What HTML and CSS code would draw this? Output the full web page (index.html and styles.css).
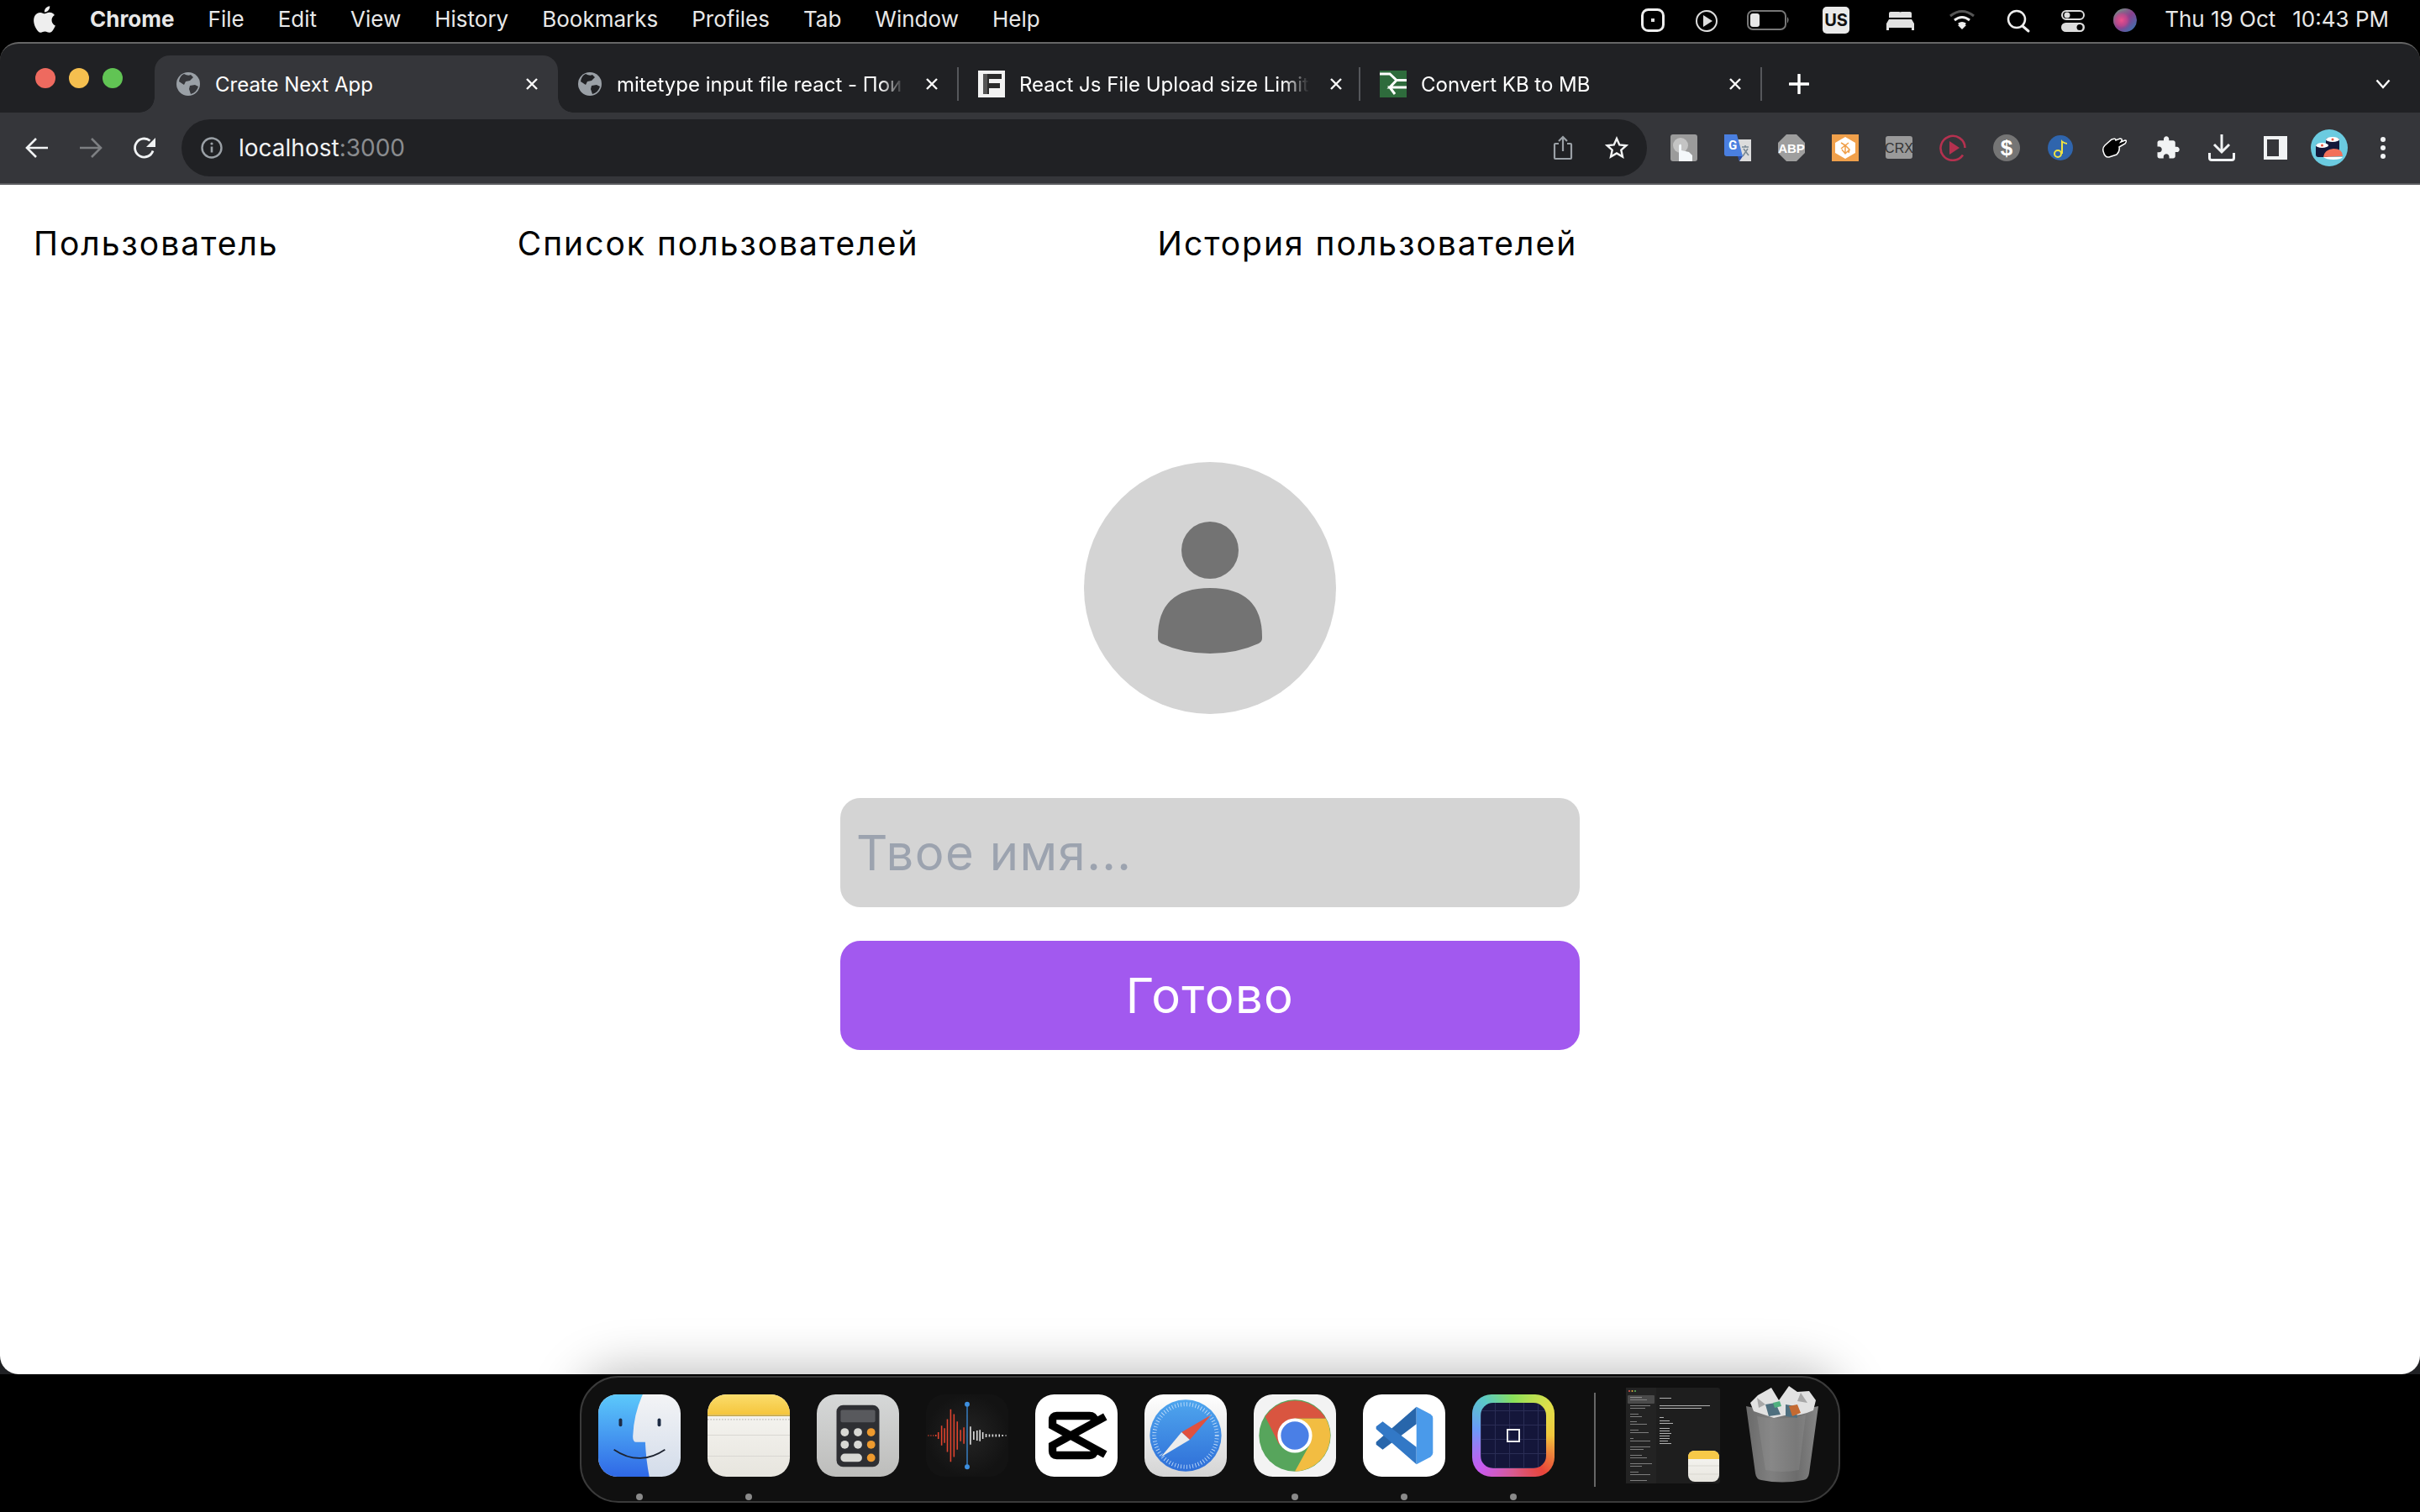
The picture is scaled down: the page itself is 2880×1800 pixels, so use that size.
FILE: index.html
```html
<!DOCTYPE html>
<html lang="ru">
<head>
    <meta charset="UTF-8">
    <title>Create Next App</title>
    <link rel="stylesheet" href="styles.css">
</head>
<body>
    <!-- mac menu bar -->
    <header class="menubar">
        <svg class="apple" viewBox="0 0 24 24" width="38" height="38"><path fill="#eee" d="M18.71 19.5c-.83 1.24-1.71 2.45-3.05 2.47-1.34.03-1.77-.79-3.29-.79-1.53 0-2 .77-3.27.82-1.31.05-2.3-1.32-3.14-2.53C4.25 17 2.94 12.45 4.7 9.39c.87-1.52 2.43-2.48 4.12-2.51 1.28-.02 2.5.87 3.29.87.78 0 2.26-1.07 3.8-.91.65.03 2.47.26 3.64 1.98-.09.06-2.17 1.28-2.15 3.81.03 3.02 2.65 4.03 2.68 4.04-.03.07-.42 1.44-1.38 2.83M13 3.5c.73-.83 1.94-1.46 2.94-1.5.13 1.17-.34 2.35-1.04 3.19-.69.85-1.83 1.51-2.95 1.42-.15-1.15.41-2.35 1.05-3.11z"/></svg>
        <nav class="menu">
            <b class="menu-app">Chrome</b>
            <span>File</span>
            <span>Edit</span>
            <span>View</span>
            <span>History</span>
            <span>Bookmarks</span>
            <span>Profiles</span>
            <span>Tab</span>
            <span>Window</span>
            <span>Help</span>
        </nav>
        <svg class="status" viewBox="1950 0 595 50" width="595" height="50">
            <defs>
                <linearGradient id="siriBase" x1="0" y1="0" x2="1" y2="1">
                    <stop offset="0" stop-color="#6fae82"/>
                    <stop offset=".5" stop-color="#8a3f8e"/>
                    <stop offset="1" stop-color="#2a7fb8"/>
                </linearGradient>
                <radialGradient id="siri" cx="35%" cy="50%" r="42%">
                    <stop offset="0" stop-color="#f0508c"/>
                    <stop offset=".6" stop-color="#c8458c" stop-opacity=".7"/>
                    <stop offset="1" stop-color="#8a3f8e" stop-opacity="0"/>
                </radialGradient>
            </defs>
            <rect x="1953.5" y="11.5" width="25" height="25" rx="7" fill="none" stroke="#eee" stroke-width="3"/>
            <rect x="1964" y="22" width="4" height="4" fill="#ddd"/>
            <circle cx="2030" cy="25" r="12" fill="none" stroke="#ddd" stroke-width="2"/>
            <path d="M2026 18l11 7-11 7z" fill="#ddd"/>
            <rect x="2079" y="13" width="45" height="22" rx="6" fill="none" stroke="#777" stroke-width="2"/>
            <rect x="2082" y="16" width="11" height="16" rx="3" fill="#e8e8e8"/>
            <path d="M2126 20q3 3 0 8z" fill="#888"/>
            <rect x="2168" y="8" width="32" height="32" rx="5" fill="#eaeaea"/>
            <text x="2184" y="31" text-anchor="middle" class="us">US</text>
            <path d="M2249 14h10q2 0 2 2v5h-14v-5q0-2 2-2zM2262 14h10q2 0 2 2v5h-14v-5q0-2 2-2z" fill="#e2e2e2"/>
            <path d="M2247 23h27l3 5v5h-33v-5z" fill="#e2e2e2"/>
            <path d="M2244 33h3v3h-3zM2274 33h3v3h-3z" fill="#e2e2e2"/>
            <path d="M2320 19q14-11 28 0" fill="none" stroke="#555" stroke-width="3"/>
            <path d="M2325 24q9-7 18 0M2330 29q4-3 8 0" fill="none" stroke="#eee" stroke-width="3"/>
            <path d="M2329 30l5-2 5 2-5 5z" fill="#eee"/>
            <circle cx="2399" cy="23" r="10" fill="none" stroke="#eee" stroke-width="2.5"/>
            <path d="M2406 31l7 6" stroke="#eee" stroke-width="3" stroke-linecap="round"/>
            <rect x="2453" y="13" width="26" height="10" rx="5" fill="none" stroke="#ddd" stroke-width="2"/>
            <circle cx="2459" cy="18" r="3.5" fill="#ddd"/>
            <rect x="2452" y="27" width="28" height="11" rx="5.5" fill="#ddd"/>
            <circle cx="2474" cy="32.5" r="3.5" fill="#000"/>
            <circle cx="2528" cy="24" r="14" fill="url(#siriBase)"/>
            <circle cx="2528" cy="24" r="14" fill="url(#siri)"/>
        </svg>
        <div class="clock"><span>Thu 19 Oct</span><span>10:43 PM</span></div>
    </header>

    <div class="browser">
        <!-- tabs -->
        <div class="tabstrip">
            <div class="lights">
                <i class="light red"></i>
                <i class="light yellow"></i>
                <i class="light green"></i>
            </div>
            <div class="tab active">
                <svg class="favicon" viewBox="0 0 28 28" width="28" height="28"><circle cx="14" cy="14" r="14" fill="#9aa0a6"/><path d="M9 2q5 3 8 1l3 3-4 4-5 1-2 4-6-4q1-7 6-9zM16 16l6-1 4 2q-2 7-9 9l-2-6z" fill="#35363a"/></svg>
                <span class="tab-title">Create Next App</span>
                <svg class="tab-close" viewBox="0 0 16 16" width="16" height="16"><path d="M2 2l12 12M14 2L2 14" stroke="#fff" stroke-width="2.4"/></svg>
            </div>
            <div class="tab">
                <svg class="favicon" viewBox="0 0 28 28" width="28" height="28"><circle cx="14" cy="14" r="14" fill="#9aa0a6"/><path d="M9 2q5 3 8 1l3 3-4 4-5 1-2 4-6-4q1-7 6-9zM16 16l6-1 4 2q-2 7-9 9l-2-6z" fill="#202124"/></svg>
                <span class="tab-title">mitetype input file react - Пои</span>
                <svg class="tab-close" viewBox="0 0 16 16" width="16" height="16"><path d="M2 2l12 12M14 2L2 14" stroke="#fff" stroke-width="2.4"/></svg>
            </div>
            <div class="tab">
                <svg class="favicon wide" viewBox="0 0 32 32" width="32" height="32"><rect width="32" height="32" fill="#f2f2f2"/><path d="M6 4h22v6H13v5h13v6H13v7H6z" fill="#2b2b2b"/><path d="M6 4h5v24H6z" fill="#555"/></svg>
                <span class="tab-title">React Js File Upload size Limit</span>
                <svg class="tab-close" viewBox="0 0 16 16" width="16" height="16"><path d="M2 2l12 12M14 2L2 14" stroke="#fff" stroke-width="2.4"/></svg>
            </div>
            <div class="tab">
                <svg class="favicon wide" viewBox="0 0 32 32" width="32" height="32"><rect width="32" height="32" fill="#2e6b3c"/><path d="M0 4h12l8 7.500h12M32 20H12l8-8.500M32 20H12L18 28" fill="none" stroke="#fff" stroke-width="3"/></svg>
                <span class="tab-title">Convert KB to MB</span>
                <svg class="tab-close" viewBox="0 0 16 16" width="16" height="16"><path d="M2 2l12 12M14 2L2 14" stroke="#fff" stroke-width="2.4"/></svg>
            </div>
            <svg class="new-tab" viewBox="0 0 24 24" width="24" height="24"><path d="M12 1v22M1 12h22" stroke="#fff" stroke-width="3.4" stroke-linecap="round"/></svg>
            <svg class="tab-list" viewBox="0 0 18 12" width="18" height="12"><path d="M1.500 1.500L9 10l7.500-8.500" fill="none" stroke="#fff" stroke-width="2.4"/></svg>
        </div>

        <!-- toolbar -->
        <div class="toolbar">
            <svg class="nav-btn" viewBox="0 0 28 26" width="28" height="26"><path d="M27 13H3M13 2L2 13l11 11" fill="none" stroke="#f1f3f4" stroke-width="2.6"/></svg>
            <svg class="nav-btn" viewBox="0 0 28 26" width="28" height="26"><path d="M1 13h24M15 2l11 11-11 11" fill="none" stroke="#7d7f82" stroke-width="2.6"/></svg>
            <svg class="nav-btn" viewBox="0 0 28 28" width="28" height="28"><path d="M24 17.500A11 11 0 1 1 20.500 5.500" fill="none" stroke="#f1f3f4" stroke-width="2.8"/><path d="M27 2v11H16z" fill="#f1f3f4"/></svg>
            <div class="omnibox">
                <svg class="info" viewBox="0 0 26 26" width="26" height="26"><circle cx="13" cy="13" r="11.500" fill="none" stroke="#9aa0a6" stroke-width="2.4"/><path d="M13 11.500v7" stroke="#9aa0a6" stroke-width="2.6"/><circle cx="13" cy="8" r="1.600" fill="#9aa0a6"/></svg>
                <span class="url">localhost<span class="url-port">:3000</span></span>
                <svg class="share" viewBox="0 0 24 30" width="24" height="30"><path d="M7 10H3q-1 0-1 1v16q0 1 1 1h18q1 0 1-1V11q0-1-1-1h-4M12 19V2M7 7l5-5 5 5" fill="none" stroke="#9aa0a6" stroke-width="2.2"/></svg>
                <svg class="star" viewBox="0 0 28 28" width="28" height="28"><path d="M14 3l3.300 7.400 8 .8-6 5.400 1.700 8L14 20.500l-7 4.100 1.700-8-6-5.400 8-.8z" fill="none" stroke="#f1f3f4" stroke-width="2.4"/></svg>
            </div>
            <div class="extensions">
                <svg viewBox="0 0 32 32" width="32" height="32"><rect width="32" height="32" rx="3" fill="#9b9b9b"/><circle cx="12" cy="13" r="9" fill="#c4c4c4"/><path d="M10 32V13q2-3 3 0v6l9 2 4 4v7z" fill="#f4f8fb"/></svg>
                <svg viewBox="0 0 32 32" width="32" height="32"><path d="M14 6h18v26H18z" fill="#dcdcdc"/><path d="M21 15h8M25 13v2M22 26l6-9M23 17l6 8" stroke="#7a8a96" stroke-width="1.600" fill="none"/><path d="M0 0h15l7 26H3q-3 0-3-3z" fill="#4a7fe0"/><path d="M16 26h6l-4 6z" fill="#2b4ea8"/><text x="10" y="18" text-anchor="middle" class="ext-g">G</text></svg>
                <svg viewBox="0 0 32 32" width="32" height="32"><path d="M10 0h12l10 10v12L22 32H10L0 22V10z" fill="#9e9e9e"/><text x="16" y="22" text-anchor="middle" class="ext-abp">ABP</text></svg>
                <svg viewBox="0 0 32 32" width="32" height="32"><rect width="32" height="32" fill="#f0a04b"/><path d="M16 3l12 7v12l-12 7-12-7V10z" fill="#fff"/><path d="M11 10l5 3 4-3M11 17l5-4 5 5-5 5-4-5M16 13v10M21 18l-1 4" stroke="#f0a04b" stroke-width="1.500" fill="none"/></svg>
                <svg viewBox="0 0 32 32" width="32" height="32"><rect y="2" width="32" height="27" rx="3" fill="#9a9a9a"/><text x="16" y="21.500" text-anchor="middle" class="ext-crx">CRX</text></svg>
                <svg viewBox="0 0 32 32" width="32" height="32"><path d="M28 24.500A14.500 14.500 0 1 1 30.500 16" fill="none" stroke="#b5314f" stroke-width="2.600"/><path d="M12 8l12 8-12 8z" fill="#b5314f"/></svg>
                <svg viewBox="0 0 32 32" width="32" height="32"><circle cx="16" cy="16" r="16" fill="#757575"/><text x="16" y="25" text-anchor="middle" class="ext-dollar">$</text></svg>
                <svg viewBox="0 0 30 30" width="30" height="30"><circle cx="15" cy="15" r="15" fill="#2f65ad"/><path d="M16 22V5q2 3 7 4v2q-4-1-5-2v13" fill="#f0e342"/><circle cx="12" cy="22" r="4" fill="none" stroke="#f0e342" stroke-width="2"/></svg>
                <svg viewBox="0 0 30 28" width="30" height="28"><path d="M2 18q-1-4 2-7l8-7q5-2 5 1l5-2q4 0 1 4l5-2q3 0 0 4l-7 4q1 5-3 9l-9 3q-5 1-7-7z" fill="#000" stroke="#fff" stroke-width="1.500"/></svg>
                <svg viewBox="0 0 24 24" width="30" height="30"><path fill="#f1f3f4" d="M20.500 11H19V7c0-1.100-.9-2-2-2h-4V3.500C13 2.120 11.880 1 10.500 1S8 2.120 8 3.500V5H4c-1.100 0-1.990.9-1.990 2v3.800H3.500c1.490 0 2.700 1.210 2.700 2.700s-1.210 2.700-2.700 2.700H2V20c0 1.100.9 2 2 2h3.800v-1.500c0-1.490 1.210-2.700 2.700-2.700 1.490 0 2.700 1.210 2.700 2.700V22H17c1.100 0 2-.9 2-2v-4h1.500c1.380 0 2.500-1.120 2.500-2.500S21.880 11 20.500 11z"/></svg>
                <svg viewBox="0 0 32 32" width="32" height="32"><path d="M16 0v20M7 12l9 9 9-9" fill="none" stroke="#f1f3f4" stroke-width="3"/><path d="M1.500 22v6q0 2.500 2.500 2.500h24q2.500 0 2.500-2.500v-6" fill="none" stroke="#f1f3f4" stroke-width="3"/></svg>
                <svg viewBox="0 0 28 28" width="28" height="28"><rect width="28" height="28" fill="#f1f3f4"/><rect x="4" y="4" width="14" height="20" fill="#35363a"/></svg>
                <svg viewBox="0 0 44 44" width="44" height="44"><circle cx="22" cy="22" r="22" fill="#6bcbe0"/><rect x="18" y="10" width="16" height="16" rx="3" fill="#14183a"/><ellipse cx="26" cy="12" rx="8" ry="3" fill="#fff"/><circle cx="26" cy="12" r="1.500" fill="#e8553f"/><rect x="6" y="17" width="15" height="16" rx="3" fill="#14183a"/><ellipse cx="13.500" cy="19" rx="7.500" ry="3" fill="#fff"/><circle cx="13.500" cy="19" r="1.500" fill="#e8553f"/><path d="M15 33q1-9 12-10 11 0 11 9z" fill="#f2705a"/><path d="M15 33h23q-2 3-11 3t-12-3z" fill="#fff"/></svg>
                <svg viewBox="0 0 8 28" width="8" height="28"><circle cx="4" cy="4" r="3" fill="#f1f3f4"/><circle cx="4" cy="14" r="3" fill="#f1f3f4"/><circle cx="4" cy="24" r="3" fill="#f1f3f4"/></svg>
            </div>
        </div>

        <!-- the page itself -->
        <main class="page">
            <nav class="page-nav">
                <a class="page-link">Пользователь</a>
                <a class="page-link">Список пользователей</a>
                <a class="page-link">История пользователей</a>
            </nav>
            <form class="user-form">
                <svg class="avatar" viewBox="0 0 300 300" width="300" height="300">
                    <circle cx="150" cy="150" r="150" fill="#d4d4d4"/>
                    <circle cx="150" cy="105" r="34" fill="#737373"/>
                    <path d="M88 210q-1-60 62-60t62 60q0 4-4 6-26 12-58 12t-58-12q-4-2-4-6z" fill="#737373"/>
                </svg>
                <input class="name-input" type="text" placeholder="Твое имя...">
                <button class="submit-btn" type="button">Готово</button>
            </form>
        </main>
    </div>

    <!-- dock -->
    <footer class="dock-bar">
        <div class="dock">
            <div class="dock-item">
                <svg class="app" viewBox="0 0 100 100">
                    <defs>
                        <clipPath id="squircle"><rect width="100" height="100" rx="23"/></clipPath>
                        <linearGradient id="fb" x1="0" y1="0" x2="0" y2="1"><stop offset="0" stop-color="#5cc9fb"/><stop offset="1" stop-color="#2f68e6"/></linearGradient>
                        <linearGradient id="fw" x1="0" y1="0" x2="0" y2="1"><stop offset="0" stop-color="#f3f4f6"/><stop offset="1" stop-color="#d3dcea"/></linearGradient>
                        <linearGradient id="ny" x1="0" y1="0" x2="0" y2="1"><stop offset="0" stop-color="#fbdd6d"/><stop offset="1" stop-color="#f5c53b"/></linearGradient>
                        <linearGradient id="np" x1="0" y1="0" x2="0" y2="1"><stop offset="0" stop-color="#f8f7f4"/><stop offset="1" stop-color="#e7e5de"/></linearGradient>
                        <linearGradient id="cb" x1="0" y1="0" x2="0" y2="1"><stop offset="0" stop-color="#d6d8d8"/><stop offset="1" stop-color="#bdbdbb"/></linearGradient>
                        <radialGradient id="vm"><stop offset="0" stop-color="#242424"/><stop offset="1" stop-color="#131313"/></radialGradient>
                        <linearGradient id="sb" x1="0" y1="0" x2="0" y2="1"><stop offset="0" stop-color="#ffffff"/><stop offset="1" stop-color="#d4d4d4"/></linearGradient>
                        <linearGradient id="sc" x1="0" y1="0" x2="0" y2="1"><stop offset="0" stop-color="#4fa6ee"/><stop offset="1" stop-color="#2f6fd8"/></linearGradient>
                        <linearGradient id="tr" x1="0" y1="0" x2="1" y2="0"><stop offset="0" stop-color="#6a6a6a"/><stop offset=".35" stop-color="#808080"/><stop offset=".7" stop-color="#6c6c6c"/><stop offset="1" stop-color="#868686"/></linearGradient>
                    </defs>
                    <g clip-path="url(#squircle)">
                        <rect width="100" height="100" fill="url(#fw)"/>
                        <path d="M0 0h54q-11 24-12 51 0 7 4 7h11q1 22 5 42H0z" fill="url(#fb)"/>
                    </g>
                    <rect x="25" y="29" width="4" height="10" rx="2" fill="#1d2b44"/>
                    <rect x="72" y="29" width="4" height="10" rx="2" fill="#1d2b44"/>
                    <path d="M19 67q31 21 62 0" fill="none" stroke="#1d2330" stroke-width="1.800"/>
                </svg>
                <i class="dot"></i>
            </div>
            <div class="dock-item">
                <svg class="app" viewBox="0 0 100 100">
                    <g clip-path="url(#squircle)">
                        <rect width="100" height="100" fill="url(#np)"/>
                        <rect width="100" height="25" fill="url(#ny)"/>
                        <rect y="25" width="100" height="1.500" fill="#bfa140"/>
                        <path d="M0 30.500h100" stroke="#b8b6b0" stroke-width="1.200" stroke-dasharray="1.500 2"/>
                        <path d="M0 49.500h100M0 75h100" stroke="#d9d7d3" stroke-width="1.200"/>
                    </g>
                </svg>
                <i class="dot"></i>
            </div>
            <div class="dock-item">
                <svg class="app" viewBox="0 0 100 100">
                    <rect width="100" height="100" rx="23" fill="url(#cb)"/>
                    <rect x="24" y="13" width="52" height="75" rx="8" fill="#2e2f33"/>
                    <rect x="29" y="19" width="42" height="15" rx="2" fill="#58595d"/>
                    <g fill="#d8d8d4"><circle cx="34" cy="46" r="5"/><circle cx="50" cy="46" r="5"/><circle cx="34" cy="61" r="5"/><circle cx="50" cy="61" r="5"/><rect x="29" y="72" width="26" height="10" rx="5"/></g>
                    <g fill="#ee9a2e"><circle cx="66" cy="46" r="5"/><circle cx="66" cy="61" r="5"/><circle cx="66" cy="77" r="5"/></g>
                </svg>
                <i class="dot hidden"></i>
            </div>
            <div class="dock-item">
                <svg class="app" viewBox="0 0 100 100">
                    <rect width="100" height="100" rx="23" fill="url(#vm)"/>
                    <path d="M3 49.500v1M6 49.500v1M9 49.500v1M12 49v2M15 46v8M19 38v24M22.500 41v18M26 30v40M30 18v64M34 24v52M38 33v34M42 43v14M46 40v20" stroke="#e0442f" stroke-width="1.600"/>
                    <path d="M54 39v22M58 45v10M62 44v12M65.500 43v14M69 46v8M73 48v4M77 48.500v3M81 48.500v3M85 48.500v3M89 48.500v3M93 49v2M97 49.500v1" stroke="#e0e0e0" stroke-width="1.600"/>
                    <path d="M50 12v76" stroke="#3d8fe0" stroke-width="1.300"/>
                    <circle cx="50" cy="12" r="3" fill="#3d8fe0"/>
                    <circle cx="50" cy="88" r="3" fill="#3d8fe0"/>
                </svg>
                <i class="dot hidden"></i>
            </div>
            <div class="dock-item">
                <svg class="app" viewBox="0 0 100 100">
                    <rect width="100" height="100" rx="23" fill="#fff"/>
                    <path d="M85 27L21 62v7q0 5 5 5h40q5 0 6-5M85 73L21 38v-7q0-5 5-5h40q5 0 6 5" fill="none" stroke="#000" stroke-width="9.500"/>
                </svg>
                <i class="dot hidden"></i>
            </div>
            <div class="dock-item">
                <svg class="app" viewBox="0 0 100 100">
                    <rect width="100" height="100" rx="23" fill="url(#sb)"/>
                    <circle cx="50" cy="50" r="43.500" fill="url(#sc)"/>
                    <circle cx="50" cy="50" r="38" fill="none" stroke="#cfe4fa" stroke-width="5" stroke-dasharray="0.800 2.800"/>
                    <path d="M81 25L45 46l10 9z" fill="#e0513f"/>
                    <path d="M20 76l25-30 10 9z" fill="#ececec"/>
                </svg>
                <i class="dot hidden"></i>
            </div>
            <div class="dock-item">
                <svg class="app" viewBox="0 0 100 100">
                    <rect width="100" height="100" rx="23" fill="#f3f3f3"/>
                    <circle cx="50" cy="50" r="43.500" fill="#57a55c"/>
                    <path d="M50 29h37.500A43.500 43.500 0 0 1 50 93.500L68 61z" fill="#f2bd42"/>
                    <path d="M14 27A43.500 43.500 0 0 1 87.500 29H50L31 61z" fill="#d95540"/>
                    <circle cx="50" cy="50" r="21" fill="#fff"/>
                    <circle cx="50" cy="50" r="17" fill="#4a7fe6"/>
                </svg>
                <i class="dot"></i>
            </div>
            <div class="dock-item">
                <svg class="app" viewBox="0 0 100 100">
                    <rect width="100" height="100" rx="23" fill="#fff"/>
                    <path d="M65 15v21L24 67l-8-6v-3z" fill="#2866ab"/>
                    <path d="M24 33l41 31v21L16 42v-3z" fill="#3278c6"/>
                    <path d="M65 15l17 9q3 2 3 5v42q0 3-3 5l-17 9z" fill="#4a9aea"/>
                </svg>
                <i class="dot"></i>
            </div>
            <div class="dock-item">
                <div class="app studio">
                    <div class="studio-inner"><i class="studio-square"></i></div>
                </div>
                <i class="dot"></i>
            </div>
            <i class="dock-sep"></i>
            <svg class="thumb" viewBox="0 0 112 114" width="112" height="114">
                <rect width="112" height="114" rx="3" fill="#1e1e1e"/>
                <rect x="0" y="0" width="36" height="114" fill="#232323"/>
                <circle cx="4" cy="4" r="1" fill="#e0584f"/><circle cx="7.500" cy="4" r="1" fill="#e4b23f"/><circle cx="11" cy="4" r="1" fill="#5cb85c"/>
                <rect x="2" y="9" width="32" height="10" rx="1" fill="#4a4a4a"/>
                <g fill="#8a8a8a">
                    <rect x="5" y="11" width="14" height="1.200"/><rect x="5" y="14" width="20" height=".9"/>
                    <rect x="5" y="21" width="24" height=".9"/><rect x="5" y="24" width="18" height=".9"/>
                    <rect x="5" y="31" width="10" height=".9"/><rect x="5" y="34" width="14" height=".9"/>
                    <rect x="5" y="40" width="8" height=".9"/><rect x="5" y="43" width="20" height=".9"/>
                    <rect x="5" y="50" width="10" height=".9"/><rect x="5" y="53" width="22" height=".9"/>
                    <rect x="5" y="60" width="4" height=".9"/><rect x="5" y="63" width="24" height=".9"/>
                    <rect x="5" y="70" width="24" height=".9"/><rect x="5" y="73" width="16" height=".9"/>
                    <rect x="5" y="80" width="14" height=".9"/><rect x="5" y="83" width="20" height=".9"/>
                    <rect x="5" y="90" width="26" height=".9"/><rect x="5" y="93" width="14" height=".9"/>
                    <rect x="5" y="100" width="10" height=".9"/><rect x="5" y="103" width="24" height=".9"/>
                    <rect x="5" y="110" width="20" height=".9"/>
                </g>
                <g fill="#b0b0b0">
                    <rect x="40" y="12" width="14" height="1"/><rect x="40" y="21" width="60" height="1"/><rect x="40" y="24" width="50" height="1"/>
                    <rect x="40" y="35" width="5" height="1"/><rect x="40" y="39" width="12" height="1"/><rect x="40" y="42" width="16" height="1"/>
                    <rect x="40" y="48" width="12" height="1"/><rect x="40" y="51" width="12" height="1"/><rect x="40" y="54" width="14" height="1"/><rect x="40" y="57" width="12" height="1"/><rect x="40" y="60" width="12" height="1"/><rect x="40" y="63" width="10" height="1"/><rect x="40" y="66" width="14" height="1"/>
                </g>
                <g>
                    <rect x="74" y="75" width="37" height="37" rx="8" fill="url(#np)"/>
                    <path d="M74 85v-2q0-8 8-8h21q8 0 8 8v2z" fill="#f7c948"/>
                    <path d="M74 93h37M74 103h37" stroke="#d4d2cc" stroke-width=".8"/>
                </g>
            </svg>
            <svg class="trash" viewBox="0 0 88 116" width="88" height="116">
                <path d="M1 24q43 10 86 0L76 104q-1 7-7 8-25 5-50 0-6-1-7-8z" fill="url(#tr)"/>
                <path d="M14 36q30 6 58-2l-8 66q-20 4-40 0z" fill="#a0a0a0" opacity=".25"/>
                <path d="M6 20l9-9 16-9 9 15 12-17 10 7 14-1 8 11-3 12q-18 8-34 6L34 38 10 30z" fill="#e2e2e2"/>
                <path d="M14 14l10 8-8 4zM66 8l8 12-12-2z" fill="#a8a8a8"/>
                <path d="M24 22l12-2 6 14-14 2zM48 22l12 2 2 14-14-2z" fill="#4f6f7f"/>
                <path d="M33 20l8-2 2 6-8 2z" fill="#4fb07f"/>
                <path d="M52 24l10-2 4 10-10 4z" fill="#c46a32"/>
            </svg>
        </div>
    </footer>
</body>
</html>
```

FILE: styles.css
```css
html, body {
    margin: 0;
    height: 100%;
    overflow: hidden;
}
body {
    display: flex;
    flex-direction: column;
    background: #000;
    font-family: Inter, "Noto Sans", sans-serif;
}
svg {
    display: block;
    flex: none;
}

/* menu bar */
.menubar {
    display: flex;
    align-items: center;
    height: 50px;
    flex: none;
    color: #e8e8e8;
    font-size: 26px;
}
.apple {
    margin-left: 34px;
    margin-top: -4px;
}
.menu {
    display: flex;
    gap: 40px;
    margin: -6px 0 0 35px;
    flex: 1;
}
.menu-app {
    font-weight: 700;
}
.status {
    margin-right: 30px;
}
.clock {
    display: flex;
    gap: 20px;
    margin: -5px 37px 0 0;
}
.us {
    font: 700 20px Inter, sans-serif;
    fill: #111;
}

/* browser window */
.browser {
    flex: 1;
    display: flex;
    flex-direction: column;
    border-top: 2px solid #666;
    border-radius: 22px 22px 0 0;
    overflow: hidden;
    background: #202124;
}
.tabstrip {
    display: flex;
    align-items: flex-end;
    height: 82px;
    flex: none;
    color: #fff;
    font-size: 24px;
}
.lights {
    display: flex;
    gap: 16px;
    width: 142px;
    padding-left: 42px;
    align-self: flex-start;
    margin-top: 29px;
}
.light {
    width: 24px;
    height: 24px;
    border-radius: 50%;
}
.red { background: #ee6a5f; }
.yellow { background: #f5bf4f; }
.green { background: #61c454; }
.tab {
    position: relative;
    display: flex;
    align-items: center;
    box-sizing: border-box;
    width: 478px;
    height: 68px;
    padding: 0 23px 0 26px;
}
.tab.active {
    width: 480px;
    margin-right: -2px;
    background: #35363a;
    border-radius: 18px 18px 0 0;
}
.tab.active::before,
.tab.active::after {
    content: "";
    position: absolute;
    bottom: 0;
    width: 18px;
    height: 18px;
}
.tab.active::before {
    left: -18px;
    background: radial-gradient(circle at 0 0, transparent 17.5px, #35363a 18px);
}
.tab.active::after {
    right: -18px;
    background: radial-gradient(circle at 100% 0, transparent 17.5px, #35363a 18px);
}
.tab + .tab::after {
    content: "";
    position: absolute;
    right: -1px;
    top: 14px;
    height: 40px;
    width: 2px;
    background: #55575b;
}
.favicon {
    margin-right: 18px;
}
.favicon.wide {
    margin: 0 17px 0 -2px;
}
.tab-title {
    flex: 1;
    white-space: nowrap;
    -webkit-mask-image: linear-gradient(to left, transparent 0, #000 30px);
}
.tab.active .tab-title {
    -webkit-mask-image: none;
}
.tab-close {
    margin-left: 24px;
}
.new-tab {
    margin: 0 0 22px 33px;
}
.tab-list {
    margin: 0 35px 28px auto;
}

/* toolbar */
.toolbar {
    display: flex;
    align-items: center;
    height: 86px;
    flex: none;
    box-sizing: border-box;
    background: #35363a;
    border-bottom: 2px solid #5a5b5f;
    padding-left: 30px;
    gap: 36px;
}
.omnibox {
    display: flex;
    align-items: center;
    box-sizing: border-box;
    width: 1744px;
    height: 68px;
    margin-left: -6px;
    padding: 0 22px 0 23px;
    border-radius: 34px;
    background: #202124;
    color: #f1f3f4;
    font-size: 28px;
}
.url {
    flex: 1;
    margin-left: 19px;
}
.url-port {
    color: #8a8c8f;
}
.star {
    margin-left: 38px;
}
.extensions {
    display: grid;
    grid-auto-flow: column;
    grid-auto-columns: 32px;
    gap: 32px;
    align-items: center;
    justify-items: center;
    margin-left: -8px;
}
.ext-g {
    font: 700 15px Roboto, sans-serif;
    fill: #fff;
}
.ext-abp {
    font: 700 15px "Liberation Sans", sans-serif;
    fill: #fff;
}
.ext-crx {
    font: 400 16px "Liberation Sans", sans-serif;
    fill: #333;
}
.ext-dollar {
    font: 700 26px "Liberation Sans", sans-serif;
    fill: #fff;
}

/* page */
.page {
    flex: 1;
    background: #fff;
    border-radius: 0 0 22px 22px;
    color: #000;
}
.page-nav {
    display: flex;
    gap: 284px;
    padding: 40px 40px 0;
    height: 60px;
    line-height: 60px;
    font-size: 39px;
    letter-spacing: 2px;
}
.user-form {
    display: flex;
    flex-direction: column;
    align-items: center;
    gap: 40px;
    width: 880px;
    margin: 230px auto 0;
}
.avatar {
    margin-bottom: 60px;
}
.name-input {
    box-sizing: border-box;
    width: 100%;
    height: 130px;
    padding: 0 19px;
    border: none;
    border-radius: 24px;
    background: #d4d4d4;
    font: 400 58px Inter, "Noto Sans", sans-serif;
    letter-spacing: 1.4px;
    outline: none;
}
.name-input::placeholder {
    color: #9ca3af;
}
.submit-btn {
    width: 100%;
    height: 130px;
    border: none;
    border-radius: 24px;
    background: #a259ef;
    color: #fff;
    font: 400 58px Inter, "Noto Sans", sans-serif;
    letter-spacing: 1.4px;
}

/* dock */
.dock-bar {
    position: relative;
    display: flex;
    justify-content: center;
    flex: none;
    height: 164px;
    padding-top: 2px;
    box-sizing: border-box;
}
.dock {
    display: flex;
    align-items: flex-start;
    box-sizing: border-box;
    width: 1500px;
    height: 151px;
    padding: 20px 0 0 20px;
    gap: 32px;
    background: #101010;
    border: 2px solid #3a3a3a;
    border-radius: 46px;
    box-shadow: 0 -6px 60px rgba(0, 0, 0, 0.28);
}
.dock-item {
    display: flex;
    flex-direction: column;
    align-items: center;
    gap: 20px;
}
.app {
    width: 98px;
    height: 98px;
}
.dot {
    width: 8px;
    height: 8px;
    border-radius: 50%;
    background: #8a8a8a;
}
.dot.hidden {
    visibility: hidden;
}
.studio {
    box-sizing: border-box;
    padding: 10px;
    border-radius: 23px;
    background: conic-gradient(#8ae05a, #dfe04a 50deg, #f2c63c 90deg, #e8453a 140deg, #d85a90 180deg, #c85af0 225deg, #6a9af8 280deg, #5ac8c8 320deg, #8ae05a);
}
.studio-inner {
    display: flex;
    align-items: center;
    justify-content: center;
    height: 100%;
    border-radius: 15px;
    background:
        repeating-linear-gradient(90deg, #2a2d55 0 1px, transparent 1px 17px),
        repeating-linear-gradient(0deg, #2a2d55 0 1px, transparent 1px 17px),
        #14163a;
}
.studio-square {
    width: 12px;
    height: 12px;
    border: 2px solid #eee;
}
.dock-sep {
    width: 2px;
    height: 112px;
    margin: -2px 4px 0 15px;
    background: #666;
}
.thumb {
    margin-top: -8px;
}
.trash {
    margin-top: -10px;
    margin-left: -2px;
}
```
